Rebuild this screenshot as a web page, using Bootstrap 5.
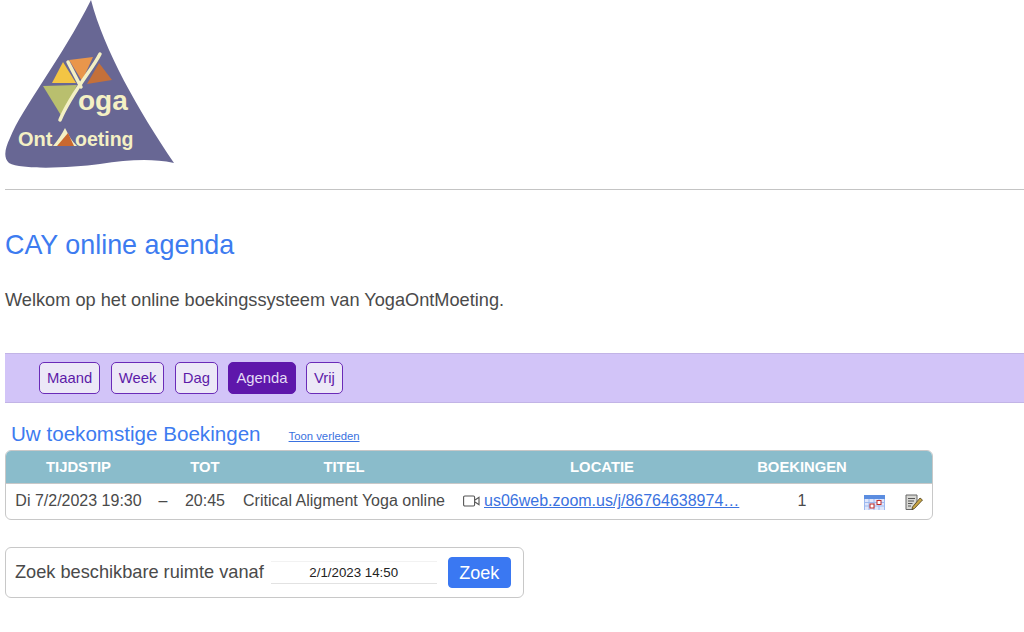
<!DOCTYPE html>
<html lang="nl">
<head>
<meta charset="utf-8">
<title>CAY online agenda</title>
<link href="https://cdn.jsdelivr.net/npm/bootstrap@5.3.0/dist/css/bootstrap.min.css" rel="stylesheet">
<style>
html,body{height:632px;overflow:hidden}
body{font-family:"Liberation Sans",Arial,sans-serif;color:#4a4a4a;background:#fff;font-size:16px}
a{color:#3a72e0}
.logo-wrap{height:168px;padding-left:5px}
.logo-wrap svg{display:block}
.top-rule{margin:21px 0 0 5px;border:0;border-top:1px solid #c4c4c4;opacity:1}
.page-title{font-size:26.9px;font-weight:400;color:#3d7bf0;margin:39px 0 0 5px;line-height:32px}
.intro{font-size:18.2px;margin:29px 0 0 5px;line-height:20px;color:#4a4a4a}
.view-band{margin:43px 0 0 5px;height:50px;background:#d2c4f8;border-top:1px solid #c2b4e6;border-bottom:1px solid #c2b4e6;padding-left:34px;gap:10.500px}
.view-btn{font-size:14.800px;line-height:18px;padding:6px 7px;height:32px;border:1px solid #6a2bb8;border-radius:5px;background:#ece8f7;color:#5c1aa8}
.view-btn.is-on{background:#5e17ab;border-color:#5e17ab;color:#e4dcf5}
.section-line{margin:14px 0 0 11px;height:33px;gap:28px}
.section-title{font-size:20.600px;font-weight:400;color:#3d7bf0;line-height:24px;margin:0}
.past-link{font-size:11.300px;color:#3a72e0;padding-top:6px}
.book-wrap{margin:0 0 0 5px;width:928px;border:1px solid #c8c8c8;border-radius:6px;overflow:hidden}
.book-table{table-layout:fixed;width:100%;margin:0;border-collapse:collapse;font-size:16px}
.book-table th{background:#8abccb;color:#fff;font-size:14.800px;font-weight:700;text-align:center;height:32px;padding:0;border:0;border-bottom:1px solid #c8c8c8;vertical-align:middle}
.book-table td{height:36px;padding:0;border:0;text-align:center;vertical-align:middle;color:#4a4a4a;white-space:nowrap}
.c1{width:145px}.c2{width:24px}.c3{width:60px}.c4{width:218px}.c5{width:298px}.c6{width:102px}.c7{width:42px}.c8{width:38px}
.loc-cell{display:flex;align-items:center;gap:4px;padding-left:10px}
.search-box{margin:27px 0 0 5px;width:519px;height:51px;border:1px solid #c8c8c8;border-radius:6px;padding:0 12px 0 9px;gap:7px;font-size:18.200px;color:#4a4a4a}
.date-field{width:166px;height:23px;border:0;border-bottom:1px solid #e2e2e2;border-top:1px solid #f2f2f2;font-size:13.300px;text-align:center;color:#222;padding:0;font-family:inherit;background:#fff;outline:0}
.seek-btn{font-size:18px;line-height:20px;padding:4px 10.500px;height:31px;background:#3a78f2;border:1px solid #3a78f2;color:#fff;border-radius:4px;margin-left:4px}
</style>
</head>
<body>
<div class="logo-wrap">
<svg width="175" height="168" viewBox="5 0 175 168" aria-label="YogaOntMoeting logo">
<path d="M91 0C104 50 138 110 174 163C150 158 128 160 100 164C70 168 22 170 9 163C3 158 5 148 10 138C22 108 62 58 91 0Z" fill="#686794"/>
<path d="M52 83L63 62L76 83Z" fill="#f3c544"/>
<path d="M69 60L93 57L82 81Z" fill="#e9964b"/>
<path d="M99 63L112 80L87 84Z" fill="#c4703a"/>
<path d="M43 86L77 85L62 117Z" fill="#b9bf6e"/>
<path d="M68 62L81 87M100 54C92 70 72 92 60 120" fill="none" stroke="#f4f0c4" stroke-width="3.500" stroke-linecap="round"/>
<text x="78" y="110" font-family="Liberation Sans" font-weight="700" font-size="28" fill="#f4f0c4">oga</text>
<text x="18" y="146" font-family="Liberation Sans" font-weight="700" font-size="20" fill="#f4f0c4">Ont</text>
<path d="M53 146C58 140 62 134 65 128C69 136 72 141 77 146Z" fill="#f4f0c4"/>
<path d="M57 146L68 133L74 146Z" fill="#c9682f"/>
<text x="75" y="146" font-family="Liberation Sans" font-weight="700" font-size="19.500" fill="#f4f0c4">oeting</text>
</svg>
</div>
<hr class="top-rule">
<h1 class="page-title">CAY online agenda</h1>
<p class="intro">Welkom op het online boekingssysteem van YogaOntMoeting.</p>
<div class="view-band d-flex align-items-center">
<a class="view-btn text-decoration-none" href="#">Maand</a>
<a class="view-btn text-decoration-none" href="#">Week</a>
<a class="view-btn text-decoration-none" href="#">Dag</a>
<a class="view-btn is-on text-decoration-none" href="#">Agenda</a>
<a class="view-btn text-decoration-none" href="#">Vrij</a>
</div>
<div class="section-line d-flex align-items-center">
<h2 class="section-title">Uw toekomstige Boekingen</h2>
<a class="past-link" href="#">Toon verleden</a>
</div>
<div class="book-wrap">
<table class="table book-table">
<colgroup><col class="c1"><col class="c2"><col class="c3"><col class="c4"><col class="c5"><col class="c6"><col class="c7"><col class="c8"></colgroup>
<thead><tr><th>TIJDSTIP</th><th></th><th>TOT</th><th>TITEL</th><th>LOCATIE</th><th>BOEKINGEN</th><th></th><th></th></tr></thead>
<tbody><tr>
<td>Di 7/2/2023 19:30</td><td>–</td><td>20:45</td><td>Critical Aligment Yoga online</td>
<td><div class="loc-cell">
<svg width="17" height="12" viewBox="0 0 17 12"><rect x="0.6" y="1" width="11" height="10" rx="1.2" fill="none" stroke="#555" stroke-width="1.1"/><path d="M12 5L16 2.2V9.8L12 7" fill="none" stroke="#555" stroke-width="1.1"/></svg>
<a href="#">us06web.zoom.us/j/86764638974…</a></div></td>
<td>1</td>
<td><svg width="21" height="15" viewBox="0 0 21 15"><rect width="21" height="15" fill="#dfe6fb"/><rect width="21" height="4" fill="#5b8de0"/><path d="M0.500 4V15M5 4V15M10 4V15M15 4V15M20.500 4V15M0 7.500H21M0 11H21" stroke="#9db9f0" stroke-width="1"/><rect x="6" y="9" width="4" height="4" fill="#fff" stroke="#c02a2a"/><rect x="13" y="5.500" width="4" height="4" fill="#fff" stroke="#c02a2a"/></svg></td>
<td><svg width="18" height="17" viewBox="0 0 18 17"><path d="M1 1H12V8L8 15.500H1Z" fill="#d8d8d4" stroke="#666"/><path d="M3 4.500H10M3 7H9M3 9.500H7.500M3 12H6" stroke="#555"/><path d="M7.500 13L15 4L17.500 6L9.500 14.500L7 15.500Z" fill="#c9a544" stroke="#4a3d1c" stroke-width=".8"/></svg></td>
</tr></tbody>
</table>
</div>
<form class="search-box d-flex align-items-center">
<span>Zoek beschikbare ruimte vanaf</span>
<input class="date-field" type="text" value="2/1/2023 14:50" aria-label="Datum">
<button type="button" class="seek-btn">Zoek</button>
</form>
</body>
</html>
